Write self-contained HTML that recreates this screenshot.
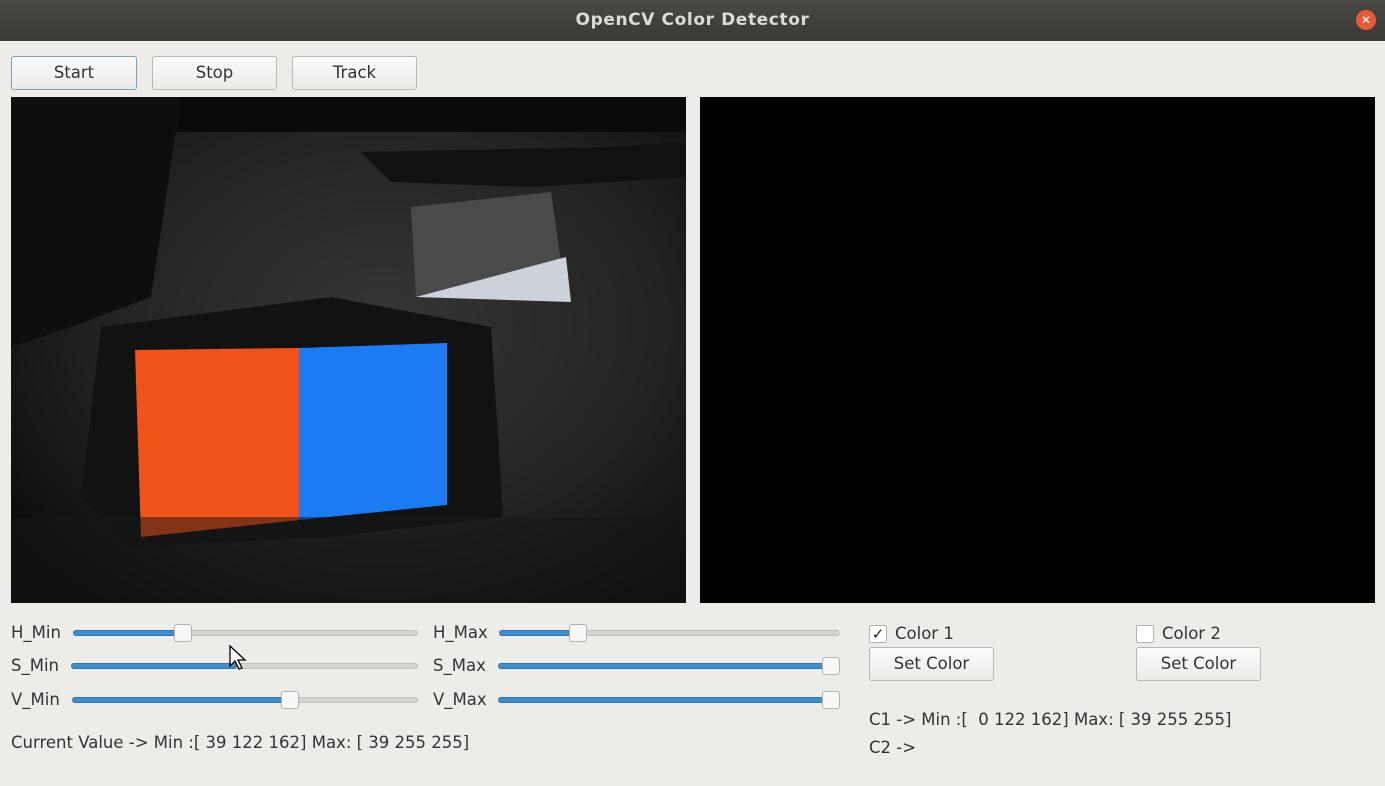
<!DOCTYPE html>
<html><head><style>
*{margin:0;padding:0;box-sizing:border-box}
body{width:1385px;height:786px;background:#edece9;font-family:"DejaVu Sans","Liberation Sans",sans-serif;position:relative;overflow:hidden;color:#333}
.title{position:absolute;left:0;top:0;width:1385px;height:41px;background:linear-gradient(#4a4944,#3a3935);color:#dcdcd6;font-weight:bold;font-size:17px;text-align:center;line-height:40px;letter-spacing:.6px}
.close{position:absolute;left:1356px;top:10px;width:20px;height:20px;border-radius:50%;background:#e8593a;color:#fff;font-size:12px;line-height:20px;text-align:center;font-family:"Liberation Sans",sans-serif}
.btn{position:absolute;height:34px;border:1px solid #b9b7b1;border-radius:3px;background:linear-gradient(#fbfbfa,#ecebe8);font-size:16.5px;text-align:center;line-height:32px;color:#333}
.lbl{position:absolute;font-size:16.5px;color:#333;white-space:nowrap}
.trk{position:absolute;height:6px;border-radius:3px;background:#d6d4d0;border:1px solid #c2c0bb}
.fill{position:absolute;height:6px;border-radius:3px;background:#3d8fd1;border:1px solid #2d76b3}
.hdl{position:absolute;width:18px;height:18px;border-radius:3px;background:#f8f8f7;border:1px solid #b5b3ae}
.cb{position:absolute;width:18px;height:18px;border:1px solid #b5b3ae;background:#fff;border-radius:2px;font-size:15px;line-height:16px;text-align:center;color:#222}
</style></head><body>
<div class="title">OpenCV Color Detector</div>
<div class="close">✕</div>
<div class="btn" style="left:11px;top:56px;width:126px;border-color:#7aa0c4">Start</div>
<div class="btn" style="left:152px;top:56px;width:125px">Stop</div>
<div class="btn" style="left:292px;top:56px;width:125px">Track</div>

<svg style="position:absolute;left:11px;top:97px" width="675" height="506" viewBox="0 0 675 506">
<defs>
<radialGradient id="g" cx="0.55" cy="0.45" r="0.7"><stop offset="0" stop-color="#363636"/><stop offset="0.6" stop-color="#222"/><stop offset="1" stop-color="#0a0a0a"/></radialGradient>
</defs>
<rect width="675" height="506" fill="url(#g)"/>
<rect x="0" y="0" width="675" height="35" fill="#0a0a0a"/>
<polygon points="350,55 600,50 675,45 675,80 520,90 380,85" fill="#111"/>
<polygon points="0,0 170,0 140,200 60,230 0,250" fill="#0e0e0e"/>
<polygon points="400,110 540,95 555,200 405,200" fill="#4a4a4a"/>
<polygon points="405,200 555,160 560,205" fill="#ccd2da"/>
<polygon points="90,230 320,200 480,230 492,420 320,440 120,450 70,400" fill="#121212"/>
<polygon points="124,253 288,251 288,423 130,440" fill="#f0521a"/>
<polygon points="288,251 436,246 436,408 288,423" fill="#1a7bf2"/>
<rect x="0" y="420" width="675" height="86" fill="#161616" opacity=".5"/>
</svg>
<div style="position:absolute;left:700px;top:97px;width:675px;height:506px;background:#000"></div>

<div class="lbl" style="left:11px;top:623px">H_Min</div>
<div class="trk" style="left:73px;top:630px;width:345px"></div><div class="fill" style="left:73px;top:630px;width:115px"></div><div class="hdl" style="left:174px;top:624px"></div>
<div class="lbl" style="left:11px;top:656px">S_Min</div>
<div class="trk" style="left:71px;top:663px;width:347px"></div><div class="fill" style="left:71px;top:663px;width:166px"></div>
<div class="lbl" style="left:11px;top:690px">V_Min</div>
<div class="trk" style="left:72px;top:697px;width:346px"></div><div class="fill" style="left:72px;top:697px;width:220px"></div><div class="hdl" style="left:281px;top:691px"></div>

<div class="lbl" style="left:433px;top:623px">H_Max</div>
<div class="trk" style="left:499px;top:630px;width:341px"></div><div class="fill" style="left:499px;top:630px;width:80px"></div><div class="hdl" style="left:569px;top:624px"></div>
<div class="lbl" style="left:433px;top:656px">S_Max</div>
<div class="trk" style="left:498px;top:663px;width:342px"></div><div class="fill" style="left:498px;top:663px;width:334px"></div><div class="hdl" style="left:822px;top:657px"></div>
<div class="lbl" style="left:433px;top:690px">V_Max</div>
<div class="trk" style="left:498px;top:697px;width:342px"></div><div class="fill" style="left:498px;top:697px;width:334px"></div><div class="hdl" style="left:822px;top:691px"></div>

<svg style="position:absolute;left:228px;top:644px" width="20" height="28"><path d="M2 2 L2 22 L7 17 L11 25 L14 24 L10 16 L17 16 Z" fill="#fff" stroke="#000" stroke-width="1.3"/></svg>

<div class="lbl" style="left:11px;top:733px">Current Value -&gt; Min :[ 39 122 162] Max: [ 39 255 255]</div>

<div class="cb" style="left:869px;top:625px">✓</div><div class="lbl" style="left:895px;top:624px">Color 1</div>
<div class="cb" style="left:1136px;top:625px"></div><div class="lbl" style="left:1162px;top:624px">Color 2</div>
<div class="btn" style="left:869px;top:647px;width:125px">Set Color</div>
<div class="btn" style="left:1136px;top:647px;width:125px">Set Color</div>
<div class="lbl" style="left:869px;top:710px">C1 -&gt; Min :[&nbsp; 0 122 162] Max: [ 39 255 255]</div>
<div class="lbl" style="left:869px;top:738px">C2 -&gt;</div>
</body></html>
